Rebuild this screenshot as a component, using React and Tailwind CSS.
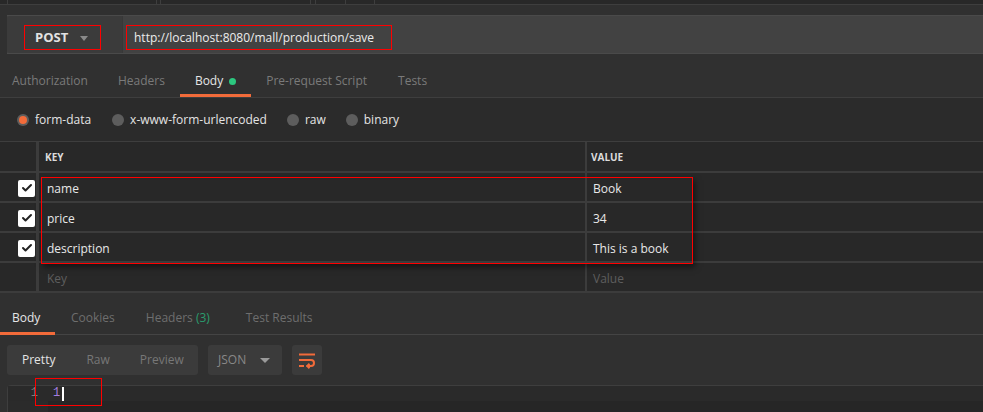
import { Check } from "lucide-react";

const rows = [
  { key: "name", value: "Book" },
  { key: "price", value: "34" },
  { key: "description", value: "This is a book" },
];

const WrapIcon = () => (
  <svg width="18" height="18" viewBox="0 0 18 18" fill="none" stroke="#f26b3a" strokeWidth="2" strokeLinecap="square">
    <path d="M2 3.5H16" />
    <path d="M2 9H13a3 3 0 0 1 0 6H9.5" />
    <path d="M11.5 12.8L9.3 15L11.5 17.2" strokeLinecap="butt" />
    <path d="M2 15H5" />
  </svg>
);

const mono = { fontFamily: '"Liberation Mono", "DejaVu Sans Mono", monospace' };

const App = () => {
  return (
    <div
      className="w-[983px] h-[412px] overflow-hidden bg-[#303030] text-[12px] text-[#e4e4e4]"
      style={{ fontFamily: '"Open Sans", "Noto Sans", sans-serif' }}
    >
      {/* top tab strip */}
      <div className="h-[5px] flex bg-[#282828] border-b border-[#3e3e3e]">
        <div className="w-[7px]" />
        <div className="w-[150px] border-l border-r border-[#3e3e3e]" />
        <div className="w-[3px]" />
        <div className="w-[150px] border-l border-[#3e3e3e]" />
        <div className="w-[5px] border-l border-[#3e3e3e]" />
        <div className="w-[30px] border-l border-[#3e3e3e]" />
        <div className="w-[29px] border-l border-[#3e3e3e]" />
        <div className="flex-1 border-l border-[#3e3e3e]" />
      </div>

      {/* url bar */}
      <div className="pt-[10px] pl-[7px]">
        <div className="h-[39px] flex border-t border-b border-[#4a4a4a] bg-[#424242]">
          <div className="w-[116px] shrink-0 pt-[9px] pl-[17px] bg-[#3b3b3b] border-r border-[#383838] rounded-l-[3px]">
            <div className="w-[77px] h-[25px] border border-[#ff0000] flex items-center pl-[10px]">
              <span className="font-bold text-[13px] text-[#e2e2e2]">POST</span>
              <span className="ml-[12px] mt-[1px] w-0 h-0 border-l-[4px] border-r-[4px] border-t-[5px] border-l-transparent border-r-transparent border-t-[#8a8a8a]" />
            </div>
          </div>
          <div className="shrink-0 pt-[9px] pl-[3px]">
            <div className="w-[266px] h-[25px] border border-solid border-[#ff0000] flex items-center pl-[7px] whitespace-nowrap text-[#ececec]">
              http://localhost:8080/mall/production/save
            </div>
          </div>
        </div>
      </div>

      {/* request tabs */}
      <div className="h-[44px] flex items-end border-b border-[#3e3e3e] text-[#7a7a7a]">
        <div className="ml-[12px] pb-[7px]">Authorization</div>
        <div className="ml-[30px] pb-[7px]">Headers</div>
        <div className="ml-[15px] px-[15px] pb-[4px] border-b-[3px] border-[#f26b3a] flex items-center text-[#e6e6e6]">
          Body
          <span className="ml-[6px] w-[7px] h-[7px] rounded-full bg-[#2cc77f]" />
        </div>
        <div className="ml-[15px] pb-[7px]">Pre-request Script</div>
        <div className="ml-[31px] pb-[7px]">Tests</div>
      </div>

      {/* body type radios */}
      <div className="h-[44px] flex items-center bg-[#2b2b2b] border-b border-[#3e3e3e] pl-[17px]">
        <span className="w-[12px] h-[12px] rounded-full bg-[#5d5d5d] flex items-center justify-center">
          <span className="w-[8px] h-[8px] rounded-full bg-[#f26b3a]" />
        </span>
        <span className="ml-[6px]">form-data</span>
        <span className="ml-[21px] w-[12px] h-[12px] rounded-full bg-[#5d5d5d]" />
        <span className="ml-[6px]">x-www-form-urlencoded</span>
        <span className="ml-[20px] w-[12px] h-[12px] rounded-full bg-[#5d5d5d]" />
        <span className="ml-[6px]">raw</span>
        <span className="ml-[20px] w-[12px] h-[12px] rounded-full bg-[#5d5d5d]" />
        <span className="ml-[6px]">binary</span>
      </div>

      {/* key/value table */}
      <div className="relative bg-[#282828]">
        <div className="h-[31px] flex border-b-2 border-[#3c3c3c] text-[10px] font-bold text-[#dcdcdc]">
          <div className="w-[39px] border-r-[3px] border-[#3c3c3c]" />
          <div className="w-[548px] border-r-2 border-[#3c3c3c] flex items-center pl-[6px] pt-[1px]">KEY</div>
          <div className="flex-1 flex items-center pl-[4px] pt-[1px]">VALUE</div>
        </div>
        {rows.map((row) => (
          <div key={row.key} className="h-[30px] flex border-b-2 border-[#3c3c3c] text-[#e8e8e8]">
            <div className="w-[39px] border-r-[3px] border-[#3c3c3c] flex items-center justify-end pr-[1px] pt-[2px]">
              <span className="w-[17px] h-[17px] rounded-[2px] bg-white flex items-center justify-center">
                <Check size={12} strokeWidth={4} color="#222222" />
              </span>
            </div>
            <div className="w-[548px] border-r-2 border-[#3c3c3c] flex items-center pl-[8px] pt-[3px]">{row.key}</div>
            <div className="flex-1 flex items-center pl-[6px] pt-[3px]">{row.value}</div>
          </div>
        ))}
        <div className="h-[30px] flex border-b-2 border-[#3c3c3c] text-[#5e5e5e]">
          <div className="w-[39px] border-r-[3px] border-[#3c3c3c]" />
          <div className="w-[548px] border-r-2 border-[#3c3c3c] flex items-center pl-[8px] pt-[3px]">Key</div>
          <div className="flex-1 flex items-center pl-[6px] pt-[3px]">Value</div>
        </div>
        {/* highlight box drawn over rows */}
        <div className="absolute left-[41px] top-[35px] w-[652px] h-[87px] border border-[#ff0000] shadow-[2px_3px_6px_rgba(0,0,0,0.5)] pointer-events-none" />
      </div>

      {/* response */}
      <div className="bg-[#303030]">
        <div className="h-[42px] flex items-end border-b border-[#444444] text-[#6e6e6e]">
          <div className="w-[55px] pl-[12px] pb-[5px] border-b-[3px] border-[#f26b3a] text-[#e6e6e6] -mb-[1px]">Body</div>
          <div className="ml-[16px] pb-[7px]">Cookies</div>
          <div className="ml-[31px] pb-[7px]">
            Headers <span className="text-[#2a9d6e]">(3)</span>
          </div>
          <div className="ml-[36px] pb-[7px]">Test Results</div>
        </div>
        <div className="h-[50px] flex items-start pt-[10px] pl-[7px]">
          <div className="w-[191px] h-[30px] rounded-[3px] bg-[#3b3b3b] flex items-center text-[#777777]">
            <span className="ml-[15px] text-[#e4e4e4]">Pretty</span>
            <span className="ml-[31px]">Raw</span>
            <span className="ml-[30px]">Preview</span>
          </div>
          <div className="ml-[10px] w-[74px] h-[30px] rounded-[3px] bg-[#3b3b3b] flex items-center pl-[10px] text-[#888888]">
            JSON
            <span className="ml-[14px] w-0 h-0 border-l-[5px] border-r-[5px] border-t-[5px] border-l-transparent border-r-transparent border-t-[#9a9a9a]" />
          </div>
          <div className="ml-[10px] w-[30px] h-[30px] rounded-[3px] bg-[#3b3b3b] flex items-center justify-center">
            <WrapIcon />
          </div>
        </div>
        <div className="relative ml-[7px] h-[40px] rounded-tl-[4px] border-t border-l border-[#3e3e3e] bg-[#262626] flex">
          <div className="w-[40px] bg-[#2b2b2b]">
            <div className="h-[15px] pr-[10px] text-right text-[12px] leading-[15px] text-[#7c7c7c] bg-[#2a2a2a]" style={mono}>1</div>
          </div>
          <div className="flex-1">
            <div className="h-[15px] flex items-center pl-[5px] bg-[#2a2a2a] text-[12px] leading-[15px] text-[#a57ee0]" style={mono}>
              1<span className="ml-[2px] w-[2px] h-[14px] bg-white" />
            </div>
          </div>
          <div className="absolute left-[27px] -top-[8px] w-[67px] h-[28px] border border-[#ff0000]" />
        </div>
      </div>
    </div>
  );
};

export default App;
